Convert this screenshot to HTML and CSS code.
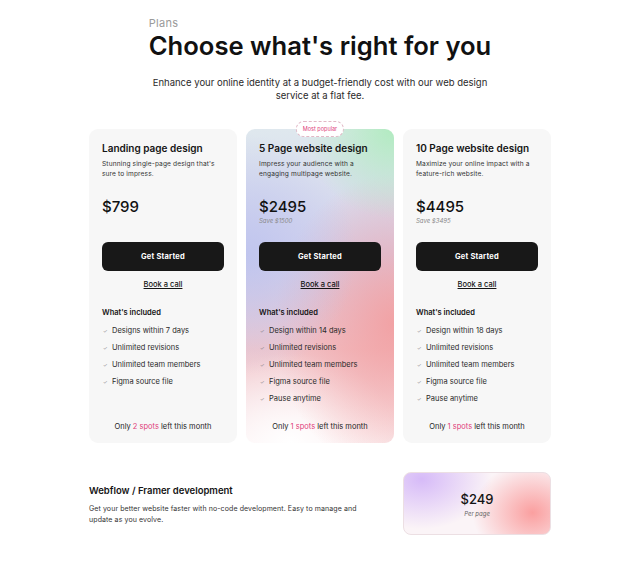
FILE: index.html
```html
<!DOCTYPE html>
<html>
<head>
<meta charset="utf-8">
<link rel="stylesheet" href="styles.css">
</head>
<body>
<div class="page">
  <header class="hero">
    <div class="hero-titles">
      <div class="eyebrow">Plans</div>
      <h1 class="title">Choose what's right for you</h1>
    </div>
    <p class="subtitle">Enhance your online identity at a budget-friendly cost with our web design service at a flat fee.</p>
  </header>

  <section class="plans">
    <div class="card">
      <h2 class="card-title">Landing page design</h2>
      <p class="card-desc">Stunning single-page design that's sure to impress.</p>
      <div class="price">$799</div>
      <div class="save">&nbsp;</div>
      <a class="btn">Get Started</a>
      <a class="book">Book a call</a>
      <div class="included">What's included</div>
      <ul class="features">
        <li><span class="check">&#10003;</span>Designs within 7 days</li>
        <li><span class="check">&#10003;</span>Unlimited revisions</li>
        <li><span class="check">&#10003;</span>Unlimited team members</li>
        <li><span class="check">&#10003;</span>Figma source file</li>
      </ul>
      <div class="spots">Only <span class="hl">2 spots</span> left this month</div>
    </div>

    <div class="card card-popular">
      <div class="badge">Most popular</div>
      <h2 class="card-title">5 Page website design</h2>
      <p class="card-desc">Impress your audience with a engaging multipage website.</p>
      <div class="price">$2495</div>
      <div class="save">Save $1500</div>
      <a class="btn">Get Started</a>
      <a class="book">Book a call</a>
      <div class="included">What's included</div>
      <ul class="features">
        <li><span class="check">&#10003;</span>Design within 14 days</li>
        <li><span class="check">&#10003;</span>Unlimited revisions</li>
        <li><span class="check">&#10003;</span>Unlimited team members</li>
        <li><span class="check">&#10003;</span>Figma source file</li>
        <li><span class="check">&#10003;</span>Pause anytime</li>
      </ul>
      <div class="spots">Only <span class="hl">1 spots</span> left this month</div>
    </div>

    <div class="card">
      <h2 class="card-title">10 Page website design</h2>
      <p class="card-desc">Maximize your online impact with a feature-rich website.</p>
      <div class="price">$4495</div>
      <div class="save">Save $3495</div>
      <a class="btn">Get Started</a>
      <a class="book">Book a call</a>
      <div class="included">What's included</div>
      <ul class="features">
        <li><span class="check">&#10003;</span>Design within 18 days</li>
        <li><span class="check">&#10003;</span>Unlimited revisions</li>
        <li><span class="check">&#10003;</span>Unlimited team members</li>
        <li><span class="check">&#10003;</span>Figma source file</li>
        <li><span class="check">&#10003;</span>Pause anytime</li>
      </ul>
      <div class="spots">Only <span class="hl">1 spots</span> left this month</div>
    </div>
  </section>

  <section class="extra">
    <div class="extra-text">
      <h3 class="extra-title">Webflow / Framer development</h3>
      <p class="extra-desc">Get your better website faster with no-code development. Easy to manage and update as you evolve.</p>
    </div>
    <div class="extra-price">
      <div class="extra-amount">$249</div>
      <div class="extra-per">Per page</div>
    </div>
  </section>
</div>
</body>
</html>
```

FILE: styles.css
```css
* { box-sizing: border-box; }
html, body { margin: 0; padding: 0; background: #fff; }
body {
  font-family: Inter, "Noto Sans", sans-serif;
  color: #141414;
}
.page {
  width: 640px;
  display: flex;
  flex-direction: column;
  align-items: center;
}
.hero {
  display: flex;
  flex-direction: column;
  align-items: center;
  padding-top: 16px;
}
.hero-titles { display: flex; flex-direction: column; align-items: flex-start; }
.eyebrow {
  font-size: 11px;
  color: #9a9a9a;
  line-height: 14px;
  letter-spacing: 0.3px;
}
.title {
  margin: 1px 0 0;
  font-size: 25.6px;
  line-height: 30px;
  font-weight: 600;
  letter-spacing: 0;
  color: #111;
}
.subtitle {
  margin: 15px 0 0;
  width: 350px;
  text-align: center;
  font-size: 9.5px;
  line-height: 13px;
  color: #2a2a2a;
}
.plans {
  margin-top: 27px;
  display: grid;
  grid-template-columns: repeat(3, 148px);
  gap: 9px;
}
.card {
  position: relative;
  background: #f7f7f7;
  border-radius: 9px;
  padding: 13px 13px 11px;
  height: 314px;
  display: flex;
  flex-direction: column;
}
.card-popular {
  background:
    radial-gradient(ellipse 90px 90px at 100% 0%, rgba(175, 235, 190, 0.95), rgba(175,235,190,0) 100%),
    radial-gradient(ellipse 110px 120px at 0% 40%, rgba(190, 196, 238, 0.9), rgba(190,196,238,0) 100%),
    radial-gradient(ellipse 120px 150px at 100% 62%, rgba(242, 160, 162, 0.95), rgba(242,160,162,0) 100%),
    radial-gradient(ellipse 110px 90px at 30% 100%, rgba(255,255,255,1), rgba(255,255,255,0) 100%),
    linear-gradient(180deg, #dfe8ee 0%, #d3d2ee 40%, #f1c6cb 70%, #fbeef0 100%);
}
.badge {
  position: absolute;
  top: -8px;
  left: 50%;
  transform: translateX(-50%);
  background: #fff;
  border: 1px dashed #e2b8c6;
  border-radius: 8px;
  color: #e0407a;
  font-size: 5.5px;
  line-height: 7px;
  padding: 3.5px 6px;
  white-space: nowrap;
}
.card-title {
  margin: 0;
  font-size: 10px;
  line-height: 13px;
  font-weight: 600;
  color: #141414;
}
.card-desc {
  margin: 4px 0 0;
  font-size: 6.6px;
  line-height: 10px;
  letter-spacing: 0.12px;
  color: #333;
  height: 20px;
  padding-right: 8px;
}
.price {
  margin-top: 18px;
  font-size: 15px;
  line-height: 19px;
  font-weight: 500;
  color: #111;
}
.save {
  font-size: 6px;
  line-height: 9px;
  font-style: italic;
  color: #888;
  height: 9px;
}
.btn {
  margin-top: 17px;
  display: flex;
  align-items: center;
  justify-content: center;
  height: 29px;
  background: #181818;
  color: #fff;
  border-radius: 6px;
  font-size: 7.5px;
  font-weight: 700;
  letter-spacing: 0.2px;
}
.book {
  margin-top: 9px;
  text-align: center;
  font-size: 7.5px;
  line-height: 10px;
  font-weight: 500;
  text-decoration: underline;
  color: #141414;
}
.included {
  margin-top: 18px;
  font-size: 7.5px;
  line-height: 10px;
  font-weight: 600;
  color: #141414;
}
.features {
  list-style: none;
  margin: 8px 0 0;
  padding: 0;
  display: flex;
  flex-direction: column;
  gap: 7px;
}
.features li {
  display: flex;
  align-items: center;
  font-size: 7.5px;
  line-height: 10px;
  color: #2a2a2a;
}
.check {
  width: 9px;
  margin-left: 1px;
  font-size: 5px;
  color: #777;
}
.spots {
  margin-top: auto;
  text-align: center;
  font-size: 7.5px;
  line-height: 10px;
  color: #222;
}
.hl { color: #e0407a; }
.extra {
  margin-top: 29px;
  width: 462px;
  display: flex;
  justify-content: space-between;
  align-items: center;
}
.extra-text { width: 292px; padding-top: 2px; }
.extra-title {
  margin: 0;
  font-size: 9.5px;
  line-height: 12px;
  font-weight: 600;
  color: #141414;
}
.extra-desc {
  margin: 6px 0 0;
  font-size: 7px;
  line-height: 11px;
  letter-spacing: 0.1px;
  color: #333;
}
.extra-price {
  width: 148px;
  height: 63px;
  border-radius: 8px;
  border: 1px solid #ecdfe3;
  background:
    radial-gradient(ellipse 70px 50px at 12% 10%, rgba(210, 180, 248, 0.9), rgba(210,180,248,0) 100%),
    radial-gradient(ellipse 60px 50px at 88% 65%, rgba(250, 150, 150, 0.9), rgba(250,150,150,0) 100%),
    #fbf4f7;
  display: flex;
  flex-direction: column;
  align-items: center;
  justify-content: center;
}
.extra-amount {
  font-size: 13px;
  line-height: 16px;
  font-weight: 500;
  color: #141414;
}
.extra-per {
  margin-top: 3px;
  font-size: 6px;
  font-style: italic;
  color: #666;
}
```
